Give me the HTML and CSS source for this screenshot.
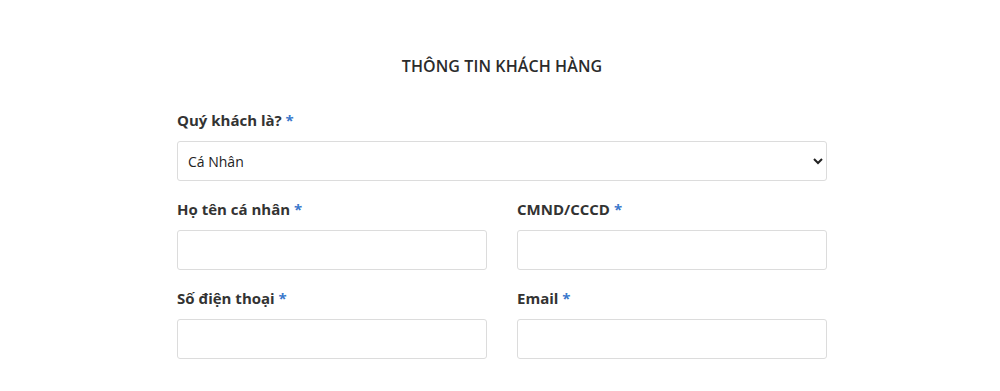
FILE: index.html
```html
<!DOCTYPE html>
<html lang="vi">
<head>
<meta charset="utf-8">
<title>Thông tin khách hàng</title>
<link rel="stylesheet" href="styles.css">
</head>
<body>
<main class="form-wrap">
  <h2 class="form-title">THÔNG TIN KHÁCH HÀNG</h2>
  <div class="field">
    <label class="field-label">Quý khách là? <span class="req">*</span></label>
    <select class="control select">
      <option>Cá Nhân</option>
      <option>Doanh Nghiệp</option>
    </select>
  </div>
  <div class="row">
    <div class="field">
      <label class="field-label">Họ tên cá nhân <span class="req">*</span></label>
      <input class="control" type="text">
    </div>
    <div class="field">
      <label class="field-label">CMND/CCCD <span class="req">*</span></label>
      <input class="control" type="text">
    </div>
  </div>
  <div class="row">
    <div class="field">
      <label class="field-label">Số điện thoại <span class="req">*</span></label>
      <input class="control" type="text">
    </div>
    <div class="field">
      <label class="field-label">Email <span class="req">*</span></label>
      <input class="control" type="email">
    </div>
  </div>
</main>
</body>
</html>
```
FILE: styles.css
```css
html, body {
  margin: 0;
  padding: 0;
  background: #fff;
}
body {
  font-family: "Open Sans", Lato, sans-serif;
  color: #333;
  padding-left: 4px;
}
.form-wrap {
  width: 650px;
  margin: 0 auto;
  padding-top: 55px;
  display: flex;
  flex-direction: column;
  gap: 17px;
}
.form-title {
  margin: 0 0 15px;
  text-align: center;
  font-size: 16px;
  line-height: 22px;
  font-weight: 600;
  color: #2b2b2b;
  letter-spacing: 0.1px;
}
.row {
  display: grid;
  grid-template-columns: 1fr 1fr;
  column-gap: 30px;
}
.field {
  display: flex;
  flex-direction: column;
}
.field-label {
  font-size: 15px;
  line-height: 22px;
  font-weight: 700;
  color: #333;
  margin-bottom: 10px;
}
.req {
  color: #3a78cc;
}
.control {
  box-sizing: border-box;
  height: 40px;
  width: 100%;
  border: 1px solid #dcdcdc;
  border-radius: 3px;
  background: #fff;
  font-family: inherit;
  font-size: 14px;
  color: #222;
  padding: 0 10px;
  margin: 0;
  outline: none;
}
.select {
  padding-left: 6px;
}
```
